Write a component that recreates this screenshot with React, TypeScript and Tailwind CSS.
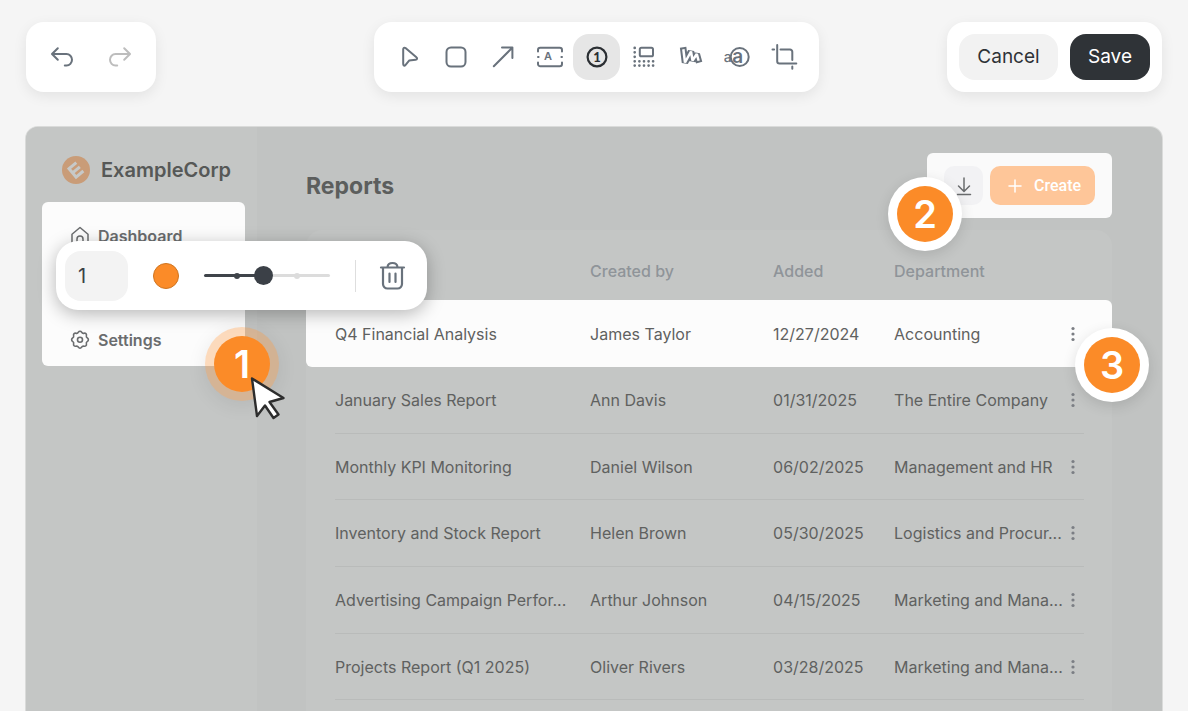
import React from "react";

type Report = { name: string; author: string; added: string; dept: string };

const reports: Report[] = [
  { name: "Q4 Financial Analysis", author: "James Taylor", added: "12/27/2024", dept: "Accounting" },
  { name: "January Sales Report", author: "Ann Davis", added: "01/31/2025", dept: "The Entire Company" },
  { name: "Monthly KPI Monitoring", author: "Daniel Wilson", added: "06/02/2025", dept: "Management and HR" },
  { name: "Inventory and Stock Report", author: "Helen Brown", added: "05/30/2025", dept: "Logistics and Procur..." },
  { name: "Advertising Campaign Perfor...", author: "Arthur Johnson", added: "04/15/2025", dept: "Marketing and Mana..." },
  { name: "Projects Report (Q1 2025)", author: "Oliver Rivers", added: "03/28/2025", dept: "Marketing and Mana..." },
];

function Icon({ children, size = 28 }: { children: React.ReactNode; size?: number }) {
  return (
    <svg width={size} height={size} viewBox={`0 0 ${size} ${size}`} fill="none" stroke="currentColor" strokeWidth="2" strokeLinecap="round" strokeLinejoin="round" aria-hidden="true">
      {children}
    </svg>
  );
}

const tools: { label: string; icon: React.ReactNode }[] = [
  { label: "Select", icon: <path d="M8.200 6.300v14.800c0 1.400 1.300 2 2.200 1l3.700-4.500 6.500-.9c1.600-.2 2-1.600.8-2.500L10.500 5c-1.100-.8-2.300 0-2.300 1.300z" /> },
  { label: "Rectangle", icon: <rect x="4.500" y="4.500" width="19" height="19" rx="4.500" /> },
  { label: "Arrow", icon: <path d="M4.800 23.300 23.400 4.600M13 4.600h10.400v10.400" /> },
  {
    label: "Text",
    icon: (
      <>
        <path d="M2 8.500V7a2.300 2.300 0 0 1 2.300-2.300h19.400A2.300 2.300 0 0 1 26 7v1.500M2 19.500V21a2.300 2.300 0 0 0 2.300 2.300h19.400A2.300 2.300 0 0 0 26 21v-1.500M2 14h.6M25.400 14h.6" />
        <text x="12" y="16.500" fontSize="11" fontWeight="600" textAnchor="middle" fill="currentColor" stroke="none">A</text>
      </>
    ),
  },
  {
    label: "Step",
    icon: (
      <>
        <circle cx="14" cy="14" r="9.400" strokeWidth="2.200" />
        <text x="14" y="18.500" fontSize="13" fontWeight="900" textAnchor="middle" fill="currentColor" stroke="none" fontFamily="Lato">1</text>
      </>
    ),
  },
  {
    label: "Blur",
    icon: (
      <>
        <rect x="9.800" y="4.700" width="13.200" height="8.600" rx="1.600" />
        <path strokeWidth="2.700" d="M4.700 4.900h0M4.700 9.300h0M4.700 13.800h0M4.700 18.300h0M9.400 18.300h0M14 18.300h0M18.600 18.300h0M23.100 18.300h0M4.700 22.600h0M9.400 22.600h0M14 22.600h0M18.600 22.600h0M23.100 22.600h0" />
      </>
    ),
  },
  {
    label: "Highlight",
    icon: (
      <g strokeLinecap="square" strokeLinejoin="bevel">
        <path strokeWidth="6.500" d="M6.500 7.500 8 19.500 14 8.500 15.500 17.500 19.800 11 21.300 16.500" />
        <path stroke="white" strokeWidth="2.500" d="M6.500 7.500 8 19.500 14 8.500 15.500 17.500 19.800 11 21.300 16.500" />
      </g>
    ),
  },
  {
    label: "Redact",
    icon: (
      <>
        <circle cx="15.700" cy="14" r="9" />
        <text x="13.600" y="19.500" fontSize="19" fontWeight="600" textAnchor="middle" fill="currentColor" stroke="none">a</text>
        <text x="3.600" y="19" fontSize="14" fontWeight="500" textAnchor="middle" fill="currentColor" stroke="none">a</text>
      </>
    ),
  },
  { label: "Crop", icon: <path d="M6.200 2v16.200a2.300 2.300 0 0 0 2.300 2.300h16.800M1.500 6.500h1.600M9.500 6.500h9.500a2.300 2.300 0 0 1 2.300 2.300v8.200M21.300 23.500v2.300" /> },
];

function Badge({ n, halo, className }: { n: number; halo: string; className: string }) {
  return (
    <div className={`absolute flex size-[74px] items-center justify-center rounded-full ${halo} ${className}`}>
      <span className="flex size-14 items-center justify-center rounded-full bg-[#fb8b28] text-[38px] leading-none font-semibold text-white">{n}</span>
    </div>
  );
}

const card = "rounded-[18px] bg-white shadow-[0_4px_14px_rgba(0,0,0,0.08)]";

function TopBar() {
  return (
    <header className="grid shrink-0 grid-cols-[348fr_auto_343fr] items-center text-[#69727c]">
      <div className={`flex h-[70px] w-[130px] items-center justify-between justify-self-start px-[22px] ${card}`}>
        <button type="button" aria-label="Undo">
          <Icon><path d="M9.800 5.200 4 11l5.800 5.800M4.500 11h14a5.500 5.800 0 0 1 0 11.600h-1.700" /></Icon>
        </button>
        <button type="button" aria-label="Redo" className="text-[#bdbdbd]">
          <Icon><path d="M18.200 5.200 24 11l-5.800 5.800M23.500 11h-14a5.500 5.800 0 0 0 0 11.600h1.700" /></Icon>
        </button>
      </div>
      <div className={`flex h-[70px] items-center px-[11px] ${card}`}>
        {tools.map((t) => (
          <button
            key={t.label}
            type="button"
            aria-label={t.label}
            className={`flex h-[46px] w-[47px] items-center justify-center rounded-2xl ${t.label === "Step" ? "bg-[#e6e6e6] text-[#2b2f33]" : ""}`}
          >
            <Icon>{t.icon}</Icon>
          </button>
        ))}
      </div>
      <div className={`flex h-[70px] items-center gap-3 justify-self-end px-3 text-[19px] ${card}`}>
        <button type="button" className="h-[46px] w-[99px] rounded-2xl bg-[#f2f2f2] text-[#2f3337]">Cancel</button>
        <button type="button" className="h-[46px] w-20 rounded-2xl bg-[#2f3337] text-white">Save</button>
      </div>
    </header>
  );
}

function Sidebar() {
  return (
    <aside className="w-[231px] shrink-0 bg-[#c4c6c5] px-4 pt-[29px]">
      <div className="flex items-center gap-[11px] pl-5">
        <svg width="28" height="28" viewBox="0 0 28 28" aria-hidden="true">
          <circle cx="14" cy="14" r="14" fill="#c99c78" />
          <g transform="rotate(-40 14 14)" fill="none" stroke="#c7c9c8" strokeWidth="3">
            <path d="M9.500 7v14M8 8.500h11M8 14h11M8 19.500h11" />
          </g>
        </svg>
        <span className="text-[20px] leading-7 font-semibold text-[#565857]">ExampleCorp</span>
      </div>
      <nav className="mt-[18px] mr-[-4px] flex h-[164px] flex-col justify-between rounded-md bg-[#fcfcfc] px-7 pt-5 pb-3 text-[16px] leading-7 font-semibold text-[#6a6c6e]">
        <a href="#dashboard" className="flex items-center gap-2">
          <Icon size={20}><path strokeWidth="1.500" d="M2 8.200 10 1.500l8 6.700V17a1.700 1.700 0 0 1-1.700 1.700H3.700A1.700 1.700 0 0 1 2 17zM7 18.500v-5.500a3 3 0 0 1 6 0v5.500" /></Icon>
          Dashboard
        </a>
        <a href="#settings" className="flex items-center gap-2">
          <Icon size={20}>
            <path strokeWidth="1.600" d="M8.400 2.200c.7-1.300 2.500-1.300 3.200 0 .5.900 1.500 1.300 2.500 1 1.400-.4 2.700.9 2.300 2.300-.3 1 .1 2 1 2.500 1.300.7 1.300 2.700 0 3.400-.9.500-1.300 1.500-1 2.500.4 1.400-.9 2.700-2.300 2.300-1-.3-2 .1-2.500 1-.7 1.300-2.500 1.300-3.200 0-.5-.9-1.500-1.300-2.500-1-1.400.4-2.700-.9-2.300-2.300.3-1-.1-2-1-2.500-1.300-.7-1.300-2.700 0-3.400.9-.5 1.300-1.500 1-2.500-.4-1.400.9-2.700 2.300-2.300 1 .3 2-.1 2.500-1z" />
            <circle cx="10" cy="9.800" r="2.500" strokeWidth="1.600" />
          </Icon>
          Settings
        </a>
      </nav>
    </aside>
  );
}

function ReportsTable() {
  const head = "p-0 text-left font-medium";
  const line = "border-b border-[#b9bbba] p-0";
  const lit = "bg-[#fcfcfc] p-0";
  return (
    <table className="w-full table-fixed border-separate border-spacing-0 text-[16px] whitespace-nowrap text-[#5f6160]">
      <colgroup>
        <col className="w-[29px]" />
        <col />
        <col className="w-[183px]" />
        <col className="w-[121px]" />
        <col className="w-[172px]" />
        <col className="w-[18px]" />
        <col className="w-7" />
      </colgroup>
      <thead>
        <tr className="h-[58px] text-[#8f9499]">
          <th className="p-0" />
          <th className="p-0" />
          <th scope="col" className={head}>Created by</th>
          <th scope="col" className={head}>Added</th>
          <th scope="col" className={head}>Department</th>
          <th className="p-0" />
          <th className="p-0" />
        </tr>
      </thead>
      <tbody>
        {reports.map((r, i) => {
          const cell = i === 0 ? lit : line;
          return (
            <tr key={r.name} className="h-[67px] nth-[3n]:h-[66px]">
              <td className={i === 0 ? "rounded-l-md bg-[#fcfcfc] p-0" : "p-0"} />
              <td className={cell}>{r.name}</td>
              <td className={cell}>{r.author}</td>
              <td className={cell}>{r.added}</td>
              <td className={cell}>{r.dept}</td>
              <td className={cell}>
                <button type="button" aria-label={`Actions for ${r.name}`} className="flex">
                  <svg width="14" height="18" viewBox="0 0 14 18" fill="#7b7e84" aria-hidden="true">
                    <circle cx="7" cy="3.500" r="1.600" />
                    <circle cx="7" cy="9" r="1.600" />
                    <circle cx="7" cy="14.500" r="1.600" />
                  </svg>
                </button>
              </td>
              <td className={i === 0 ? "rounded-r-md bg-[#fcfcfc] p-0" : "p-0"} />
            </tr>
          );
        })}
      </tbody>
    </table>
  );
}

function StepToolbar() {
  return (
    <div className="absolute top-[114px] left-[30px] flex h-[69px] w-[371px] items-center rounded-[22px] bg-white pr-5 pl-[9px] text-[#69727c] shadow-[0_4px_18px_rgba(0,0,0,0.28)]">
      <input aria-label="Step number" defaultValue="1" className="h-[50px] w-[63px] rounded-2xl bg-[#f3f3f3] pl-[13px] text-[20px] text-[#3b4046] outline-none" />
      <button type="button" aria-label="Color" className="ml-[25px] size-[26px] rounded-full border border-[#cf741f] bg-[#fb8b28]" />
      <div className="relative ml-[25px] flex h-5 w-[126px] items-center">
        <span className="absolute left-[30px] size-[6px] rounded-full bg-[#3f444a]" />
        <span className="absolute left-[90px] size-[6px] rounded-full bg-[#dcdcdc]" />
        <input
          type="range"
          aria-label="Size"
          min={0}
          max={100}
          defaultValue={47}
          className="relative h-[3px] w-full appearance-none rounded-full bg-[linear-gradient(to_right,#3f444a_48%,#dcdcdc_48%)] outline-none [&::-webkit-slider-thumb]:size-[19px] [&::-webkit-slider-thumb]:appearance-none [&::-webkit-slider-thumb]:rounded-full [&::-webkit-slider-thumb]:bg-[#3b4047]"
        />
      </div>
      <span className="ml-[25px] h-8 w-px bg-[#dedede]" />
      <button type="button" aria-label="Delete" className="ml-auto">
        <Icon size={30}>
          <path strokeWidth="2.200" d="M4 6.500h23M6 7v16a4.500 4.500 0 0 0 4.500 4.500h10a4.500 4.500 0 0 0 4.500-4.500V7M10.500 6c.3-2.800 1.800-4 5-4s4.700 1.200 5 4M12.500 12.500v8.500M18.500 12.500v8.500" />
        </Icon>
      </button>
    </div>
  );
}

export default function App() {
  return (
    <div className="flex h-screen flex-col gap-[35px] overflow-hidden bg-[#f5f5f5] px-[26px] pt-[22px] font-['Inter',sans-serif]">
      <TopBar />
      <section className="relative flex min-h-0 grow overflow-hidden rounded-t-xl bg-[#c1c3c2] shadow-[0_0_0_1px_#dadbda]">
        <Sidebar />
        <main className="flex min-w-0 grow flex-col pr-[50px] pl-[49px]">
          <div className="mt-[26px] flex shrink-0 items-center justify-between">
            <h1 className="text-[23px] leading-8 font-bold text-[#5c5e5d]">Reports</h1>
            <div className="flex h-[65px] items-center gap-[7px] rounded-md bg-[#fafafa] px-[17px]">
              <button type="button" aria-label="Download" className="flex size-[39px] items-center justify-center rounded-[10px] bg-[#f2f2f4] text-[#6a6c6e]">
                <Icon size={20}><path strokeWidth="1.500" d="M10 2v13M4.500 10l5.500 5.500 5.500-5.500M3.500 18.500h13" /></Icon>
              </button>
              <button type="button" className="flex h-[39px] w-[105px] items-center justify-end gap-3 rounded-[10px] bg-[#fec699] pr-[14px] font-[Roboto] text-[16px] font-medium text-white">
                <svg width="14" height="14" viewBox="0 0 14 14" stroke="currentColor" strokeWidth="1.500" strokeLinecap="round" aria-hidden="true"><path d="M7 1v12M1 7h12" /></svg>
                Create
              </button>
            </div>
          </div>
          <div className="mt-3 min-h-0 grow rounded-t-2xl bg-[#c4c6c5] pt-3">
            <ReportsTable />
          </div>
        </main>
        <StepToolbar />
        <Badge n={1} halo="bg-[#fb8b28]/30 shadow-[0_4px_20px_rgba(0,0,0,0.08)]" className="top-[200px] left-[179px]" />
        <Badge n={2} halo="bg-white shadow-[0_4px_14px_rgba(0,0,0,0.12)]" className="top-[50px] right-[200px]" />
        <Badge n={3} halo="bg-white shadow-[0_4px_14px_rgba(0,0,0,0.12)]" className="top-[201px] right-[13px]" />
        <svg className="absolute top-[249px] left-[223px]" width="38" height="46" viewBox="0 0 38 46" fill="white" stroke="#2d2d2d" strokeWidth="2.400" strokeLinejoin="round" aria-hidden="true">
          <path d="M3 2.500 34.500 22 20.500 26 29.500 38.500 24.500 42 16 29.500 8 40z" />
        </svg>
      </section>
    </div>
  );
}
